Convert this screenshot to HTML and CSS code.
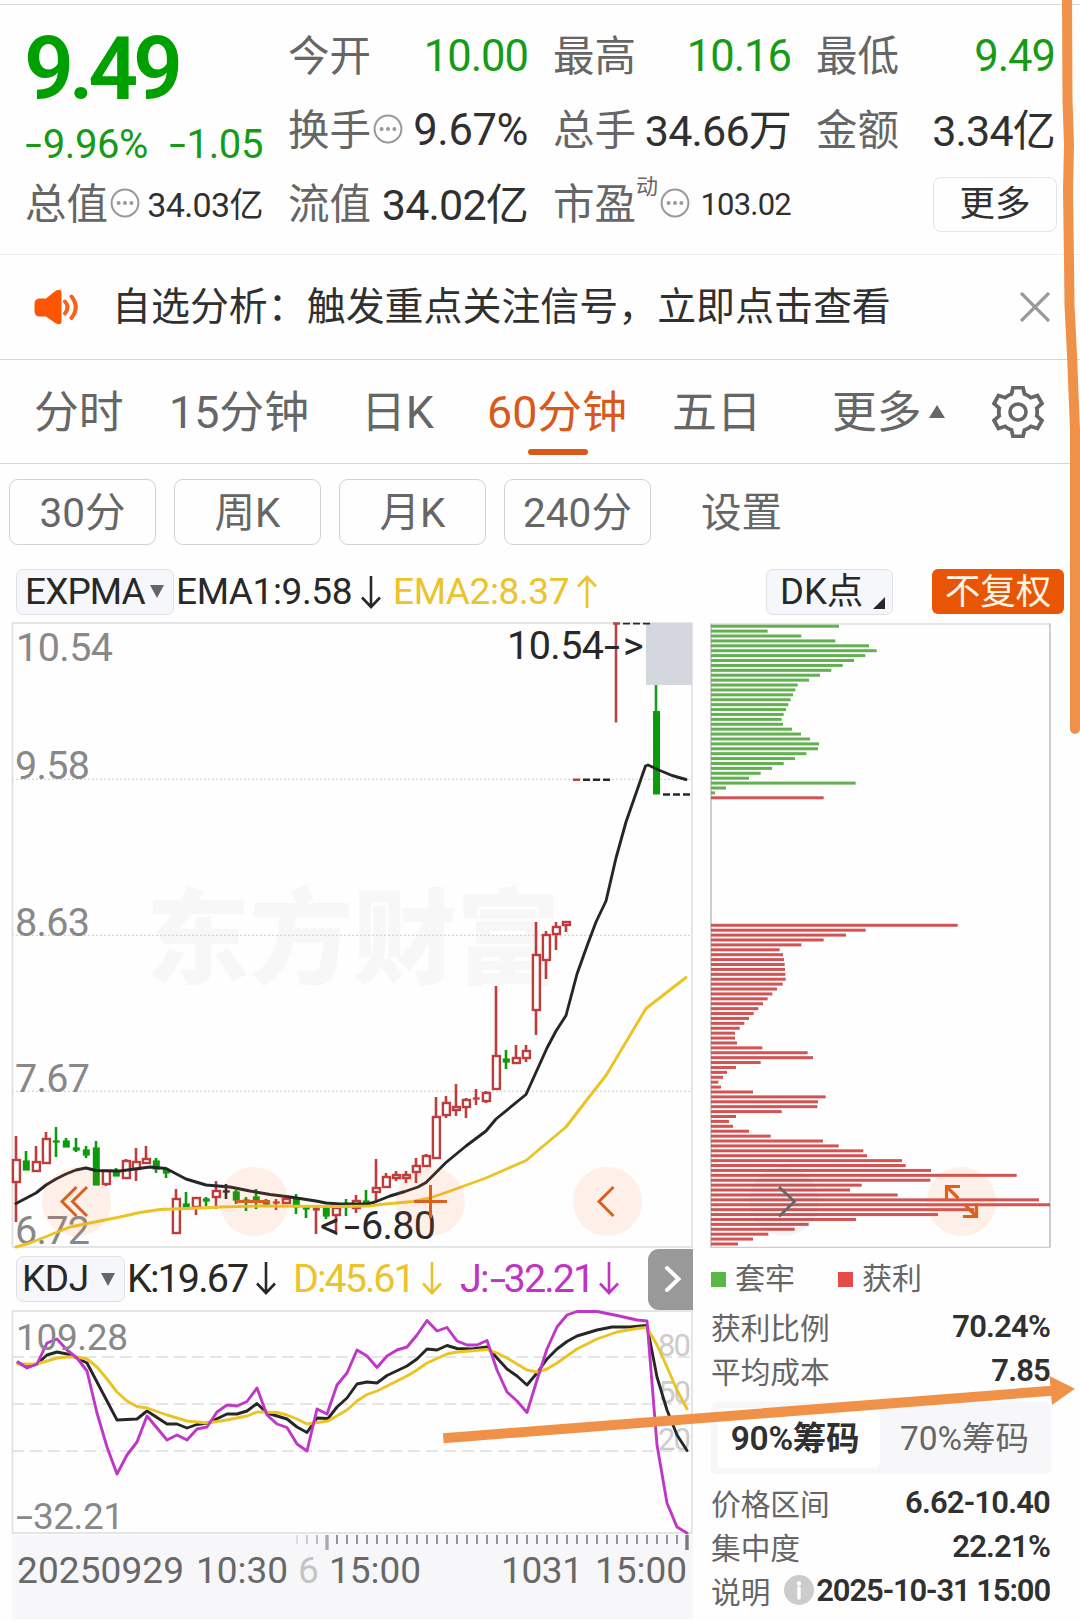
FILE: index.html
```html
<!DOCTYPE html>
<html lang="zh-CN">
<head>
<meta charset="utf-8">
<title>60分钟K线</title>
<link rel="stylesheet" href="styles.css">
</head>
<body>
<svg class="defs" width="0" height="0">
  <symbol id="dots" viewBox="0 0 30 30"><circle cx="15" cy="15" r="13.4" fill="none" stroke="#999" stroke-width="2"/><circle cx="8.6" cy="15" r="2" fill="#999"/><circle cx="15" cy="15" r="2" fill="#999"/><circle cx="21.4" cy="15" r="2" fill="#999"/></symbol>
  <symbol id="down" viewBox="0 0 20 34"><path d="M10 1V32M1 22.5L10 32L19 22.5" fill="none" stroke="currentColor" stroke-width="2.6"/></symbol>
  <symbol id="up" viewBox="0 0 20 34"><path d="M10 33V2M1 11.500L10 2L19 11.500" fill="none" stroke="currentColor" stroke-width="2.6"/></symbol>
</svg>
<main class="page">
  <header class="quote">
    <div class="price">
      <strong>9.49</strong>
      <div class="change"><span><i class="minus">-</i>9.96%</span><span><i class="minus">-</i>1.05</span></div>
    </div>
    <div class="cell"><span class="label">今开</span><span class="val green">10.00</span></div>
    <div class="cell"><span class="label">最高</span><span class="val green">10.16</span></div>
    <div class="cell"><span class="label">最低</span><span class="val green">9.49</span></div>
    <div class="cell"><span class="label">换手<svg class="dots"><use href="#dots"/></svg></span><span class="val pct">9.67%</span></div>
    <div class="cell"><span class="label">总手</span><span class="val cjk">34.66万</span></div>
    <div class="cell"><span class="label">金额</span><span class="val cjk">3.34亿</span></div>
    <div class="cell"><span class="label">总值<svg class="dots"><use href="#dots"/></svg></span><span class="val mid">34.03亿</span></div>
    <div class="cell"><span class="label">流值</span><span class="val cjk">34.02亿</span></div>
    <div class="cell"><span class="label">市盈<sup>动</sup><svg class="dots"><use href="#dots"/></svg></span><span class="val small">103.02</span></div>
    <div class="cell end"><button class="more">更多</button></div>
  </header>

  <section class="notice">
    <svg class="speaker" viewBox="0 0 46 36"><path d="M6 9.500H12L22 1.500Q27.500 -1 27.500 4V32Q27.500 37 22 34.500L12 27.500H6Q0.500 27.500 .5 22V15Q.5 9.500 6 9.500Z" fill="#ff5500"/><path d="M31 12.500Q36 18 31 24.500M37.500 7.500Q46 18 37.500 29" fill="none" stroke="#f96319" stroke-width="4" stroke-linecap="round"/></svg>
    <p>自选分析：触发重点关注信号，立即点击查看</p>
    <svg class="close" viewBox="0 0 30 30"><path d="M1 1L29 29M29 1L1 29" stroke="#999" stroke-width="3.300"/></svg>
  </section>

  <nav class="tabs">
    <span>分时</span><span>15分钟</span><span>日K</span><span class="on">60分钟</span><span>五日</span>
    <span>更多<i class="tri-up"></i></span>
    <svg class="gear" viewBox="-26 -26 52 52"><path d="M-5 -24.500H5L6.500 -18Q10 -16.800 12.800 -14.300L19.500 -16.500L24 -8.500L18.800 -3.800Q19.600 0 18.800 3.800L24 8.500L19.500 16.500L12.800 14.300Q10 16.800 6.500 18L5 24.500H-5L-6.500 18Q-10 16.800 -12.800 14.300L-19.500 16.500L-24 8.500L-18.800 3.800Q-19.600 0 -18.800 -3.800L-24 -8.500L-19.500 -16.500L-12.800 -14.300Q-10 -16.800 -6.500 -18Z" fill="none" stroke="#666" stroke-width="3.800"/><circle r="8" fill="none" stroke="#666" stroke-width="3.600"/></svg>
  </nav>

  <div class="periods">
    <button>30分</button><button>周K</button><button>月K</button><button>240分</button><span>设置</span>
  </div>

  <div class="indicator">
    <span class="pill expma">EXPMA<i class="tri-down"></i></span>
    <span class="ema">EMA1:9.58</span><svg class="arrow"><use href="#down"/></svg>
    <span class="ema yellow second">EMA2:8.37</span><svg class="arrow yellow"><use href="#up"/></svg>
    <span class="pill dk">DK点<i class="corner"></i></span>
    <span class="adjust">不复权</span>
  </div>

  <div class="body">
    <div class="left">
      <svg class="kline" viewBox="12 622 682 626">
        <text class="watermark" x="146" y="976" textLength="414" lengthAdjust="spacingAndGlyphs">东方财富</text>
        <path d="M12 779.300H692M12 935.300H692M12 1091.300H692" stroke="#ccc" stroke-dasharray="2 2"/>
        <rect x="12.500" y="623" width="679.500" height="624" fill="none" stroke="#dfdfdf" stroke-width="1.600"/>
        <g id="candles"></g>
        <rect x="646" y="623" width="46" height="62" fill="#d4d7dd"/>
        <path d="M656 685V712" stroke="#1c9a1c" stroke-width="2.600"/><path d="M656.500 711V794.500" stroke="#0a9c0a" stroke-width="7"/>
        <path d="M616 623V722.500" stroke="#b8433f" stroke-width="2.600"/>
        <path d="M573 779.800H580M613 623.500H620" stroke="#b8433f" stroke-width="2.400"/>
        <path d="M583 779.800H610M663 794.500H690" stroke="#282828" stroke-width="2.400" stroke-dasharray="7 3"/>
        <path d="M623 623.600H650" stroke="#282828" stroke-width="1.600" stroke-dasharray="7 3"/>
        <g class="axis-text">
          <text x="16" y="661" textLength="97">10.54</text><text x="15" y="779" textLength="75">9.58</text><text x="15" y="936" textLength="75">8.63</text><text x="15" y="1092" textLength="75">7.67</text><text x="15" y="1244" textLength="75">6.72</text>
        </g>
        <polyline class="line dark" points="16,1203.500 36,1193 46,1185 56,1179 66,1174 76,1170 86,1168 96,1170.500 120,1171 150,1167 166,1168.500 186,1179 206,1185 230,1187 250,1191 270,1194.500 290,1197 316,1201 326,1203 340,1204 368,1204 375,1202 390,1196 405,1191.500 418,1187 426,1182.500 446,1162.500 466,1146 486,1131 496,1119 526,1094.500 547,1048 556,1031 566,1015.500 577,974 587,946 596,922 606,901 616,858 626,822 645.500,766 648,765 660,770.500 672,775.500 686,779.500"/>
        <polyline class="line gold" points="16,1247 30,1243 50,1235 70,1227 90,1223 120,1217 140,1212.500 160,1209.500 200,1208 220,1207 260,1206 340,1206.500 370,1206 380,1204.500 413,1201.500 430,1198 446,1192.500 486,1178 526,1160.500 566,1127 586,1101 606,1075.500 646,1008.500 686,977.500"/>
        <g class="mark">
          <text x="507" y="659" textLength="97">10.54</text><text x="604" y="659" textLength="16" lengthAdjust="spacingAndGlyphs">-</text><text x="623" y="659">&gt;</text>
          <text x="320" y="1239">&lt;</text><text x="344" y="1239" textLength="16" lengthAdjust="spacingAndGlyphs">-</text><text x="361" y="1239" textLength="75">6.80</text>
        </g>
        <g fill="#ff6a28" fill-opacity=".1"><circle cx="76.500" cy="1202" r="34.500"/><circle cx="254" cy="1201.500" r="34.500"/><circle cx="430.500" cy="1201.500" r="34.500"/><circle cx="607.500" cy="1201.500" r="34.500"/></g>
        <path d="M76.500 1187L62 1201.500L76.500 1216M87 1187L72.500 1201.500L87 1216M236 1201.500H270M414 1201.500H447M430.500 1185V1218M613.500 1187L599 1201.500L613.500 1216" fill="none" stroke="#d8611f" stroke-width="3"/>
      </svg>
      <div class="kdj-bar">
        <span class="pill kdj">KDJ<i class="tri-down"></i></span>
        <span class="k">K:19.67</span><svg class="arrow"><use href="#down"/></svg>
        <span class="k yellow d">D:45.61</span><svg class="arrow yellow"><use href="#down"/></svg>
        <span class="k purple j">J:<i class="minus">-</i>32.21</span><svg class="arrow purple"><use href="#down"/></svg>
        <span class="next"><svg viewBox="0 0 18 28"><path d="M3 3L14.500 14L3 25" fill="none" stroke="#fff" stroke-width="4" stroke-linecap="round"/></svg></span>
      </div>
      <svg class="kdj-chart" viewBox="12 1310 682 225">
        <path d="M12 1357H692M12 1404H692M12 1451H692" stroke="#ddd" stroke-width="1.600" stroke-dasharray="12 6"/>
        <rect x="12.500" y="1311" width="679.500" height="222" fill="none" stroke="#dfdfdf" stroke-width="1.600"/>
        <g class="levels"><text x="658" y="1356" textLength="33">80</text><text x="658" y="1403" textLength="33">50</text><text x="658" y="1450" textLength="33">20</text></g>
        <polyline class="line dark" points="18,1363 27,1367 37,1364 47,1355 57,1352 67,1354 77,1358 87,1363 117,1420 137,1419 147,1411 167,1424 177,1424 187,1428 197,1424.500 208,1423 227,1414 237,1414 247,1411 257,1403.500 267,1413 287,1419 297,1427 307,1432.500 317,1418 328,1418.500 337,1407 347,1398 357,1384 367,1382 377,1383 387,1375.500 407,1366 417,1359 427,1349 437,1350 447,1345.500 457,1348.500 472,1349 487,1347 497,1358 507,1369 517,1376 527,1385 537,1373 547,1359 557,1349 567,1341.500 577,1336 597,1330 612,1327 630,1327 647,1325.500 657,1377 667,1410 677,1435 687,1450.500"/>
        <polyline class="line gold" points="18,1364 37,1364 57,1358 67,1357 77,1357 87,1359 97,1367 107,1379 117,1392 127,1401 137,1406.500 147,1408 167,1415 187,1421 207,1423 227,1420 247,1416 257,1412 277,1412.500 287,1415 297,1419 307,1424 328,1421 347,1410 357,1401 367,1394.500 377,1391 407,1376 417,1370 427,1363 447,1354 457,1352 487,1349.500 497,1353 507,1358 527,1370 537,1372 547,1369 557,1363 577,1349 597,1339 617,1332 637,1328.500 647,1327.500 657,1345 667,1367 677,1390 687,1409"/>
        <polyline class="line violet" points="18,1362 27,1368 37,1364 47,1343 57,1339 67,1350 77,1358 87,1371 97,1413 107,1447 117,1474 127,1455 137,1442 147,1416 157,1428 167,1440 177,1435 187,1440 197,1429 207,1427 217,1412 227,1405 237,1406 247,1401.500 257,1388 267,1415 277,1424 287,1427.500 297,1444 307,1451 317,1409 327,1414 337,1385 347,1373 357,1350 367,1356 377,1367.500 387,1356 397,1350 407,1347 417,1335 427,1320.500 437,1331 447,1327.500 457,1341 467,1345 477,1345 487,1340.500 497,1370 507,1392 517,1401 527,1412.500 537,1380 547,1349 557,1327 567,1315 577,1311.500 597,1311.500 617,1315.500 637,1320 647,1321 657,1445 667,1503 677,1527 687,1533"/>
        <g class="axis-text range"><text x="16" y="1350" textLength="112">109.28</text><text x="16" y="1529" textLength="17" lengthAdjust="spacingAndGlyphs">-</text><text x="33" y="1529" textLength="91">32.21</text></g>
      </svg>
      <svg class="dates" viewBox="12 1535 682 84">
        <rect x="12" y="1535" width="681" height="84" fill="#f7f7fa"/>
        <g id="ticks"></g>
        <text x="17" y="1583" textLength="167">20250929</text><text x="196" y="1583" textLength="92">10:30</text><text x="298" y="1583" class="faded">6</text><text x="329" y="1583" textLength="92">15:00</text><text x="501" y="1583" textLength="82">1031</text><text x="595" y="1583" textLength="92">15:00</text>
      </svg>
    </div>

    <aside class="chips">
      <svg class="chip-chart" viewBox="710 622 342 627">
        <path d="M711 624H1050M711 1247.300H1050" stroke="#ccc" stroke-width="1.200"/><path d="M711 623.500V1247.500M1050 623.500V1247.500" stroke="#c9c9c9" stroke-width="1.800"/>
        <g id="bars"></g>
        <circle cx="784" cy="1201.500" r="34.500" fill="#667" fill-opacity=".07"/><path d="M779 1187L794.500 1201.500L779 1216.500" fill="none" stroke="#666" stroke-width="2.800"/>
        <circle cx="961.500" cy="1201.500" r="34.500" fill="#ff6a28" fill-opacity=".1"/>
        <path d="M960 1186.500H946.500V1199.500M947 1187L958.500 1198.500M963 1216.500H976.500V1203.500M976 1216L964.500 1204.500" fill="none" stroke="#dc611e" stroke-width="3.200"/>
      </svg>
      <div class="legend"><i class="sq g"></i><span>套牢</span><i class="sq r"></i><span>获利</span></div>
      <div class="stat"><span>获利比例</span><b>70.24%</b></div>
      <div class="stat"><span>平均成本</span><b>7.85</b></div>
      <div class="switch"><span class="active">90%筹码</span><span>70%筹码</span></div>
      <div class="stat"><span>价格区间</span><b>6.62-10.40</b></div>
      <div class="stat"><span>集中度</span><b>22.21%</b></div>
      <div class="stat"><span>说明</span><svg class="info" viewBox="0 0 30 30"><circle cx="15" cy="15" r="15" fill="#ccc"/><circle cx="15" cy="8.500" r="2.200" fill="#fff"/><path d="M15 13V23" stroke="#fff" stroke-width="3.400" stroke-linecap="round"/></svg><b class="date">2025-10-31 15:00</b></div>
    </aside>
  </div>

  <svg class="marker" viewBox="0 0 1080 1621">
    <path d="M1067 -5L1067.500 100L1069 145L1068 190L1069 260L1069.500 305L1072 355L1075 430V729" fill="none" stroke="#f0914a" stroke-width="10" stroke-linecap="round" stroke-linejoin="round"/>
    <path d="M443.300 1438.200L1052 1390.800" stroke="#f0914a" stroke-width="10"/><path d="M1049.500 1376L1075 1388.800L1052 1405Z" fill="#f0914a"/>
  </svg>
</main>
<script src="charts.js"></script>
</body>
</html>
```
FILE: styles.css
```css
* { box-sizing: border-box; }
body { margin: 0; background: #fefefe; color: #303030; font-family: Roboto, "Noto Sans CJK SC", sans-serif; }
button { font: inherit; color: inherit; background: #fefefe; padding: 0; margin: 0; }
svg { display: block; flex: none; }
.defs { position: absolute; }
.page { position: relative; width: 1080px; height: 1621px; overflow: hidden; padding-top: 4px; }
.green { color: #159b15 !important; }
.yellow { color: #ebc32c !important; }
.purple { color: #be35c4 !important; }
.minus { display: inline-block; font-style: normal; transform: scaleX(1.5); margin: 0 4px 0 3px; }

.quote { height: 251px; border-top: 1px solid #d8d8d8; border-bottom: 1px solid #ececec; padding: 14px 24px 0 25px; display: grid; grid-template-columns: 238px 240px 238px 239px; column-gap: 25px; grid-template-rows: 74px 74px 74px; }
.price { grid-row: span 2; color: #00a000; }
.price strong { display: block; font-weight: 600; font-size: 87.500px; line-height: 101px; letter-spacing: -5.300px; margin-left: -1px; }
.change { display: flex; justify-content: space-between; font-size: 40px; line-height: 50px; color: #159b15; letter-spacing: -.4px; }
.cell { display: flex; justify-content: space-between; align-items: center; white-space: nowrap; line-height: 60px; }
.cell.end { justify-content: flex-end; }
.label { display: flex; align-items: center; font-size: 41.500px; color: #666; padding-top: 2px; }
.label .dots { width: 30px; height: 30px; margin-left: 2px; margin-top: -4px; }
.label sup { font-size: 22px; line-height: 30px; align-self: flex-start; margin: -3px 0 0 0; }
.val { font-size: 43.500px; letter-spacing: -1px; padding-top: 2px; }
.val.pct { letter-spacing: -.4px; }
.val.cjk { font-size: 43px; letter-spacing: -.8px; }
.val.mid { font-size: 34px; letter-spacing: -.6px; }
.val.small { font-size: 31px; letter-spacing: -.8px; }
.more { width: 124px; height: 55px; border: 1.500px solid #e2e5e8; border-radius: 8px; font-size: 35.500px; line-height: 52px; margin-right: -2px; }

.notice { height: 105px; border-bottom: 1px solid #d6d6d6; display: flex; align-items: center; padding: 0 30px 1px 34px; }
.speaker { width: 46px; height: 36px; }
.notice p { margin: 0 auto 0 32px; font-size: 38.950px; line-height: 50px; }
.close { width: 30px; height: 30px; }

.tabs { height: 104px; border-bottom: 1px solid #d6d6d6; padding: 3px 0 0 34px; display: grid; grid-template-columns: 135px 192px 126px 185px 160px 159px 60px; align-items: center; font-size: 44.800px; line-height: 60px; color: #666; white-space: nowrap; }
.tabs .on { color: #d9591a; justify-self: start; position: relative; }
.tabs .on::after { content: ""; position: absolute; left: 41px; bottom: -12px; width: 60px; height: 6px; border-radius: 3px; background: #d9591a; }
.tri-up { display: inline-block; border: 8px solid transparent; border-top: 0; border-bottom: 13px solid #666; margin: 0 0 10px 7px; vertical-align: baseline; }
.gear { width: 52px; height: 52px; margin: -3px 0 0 1px; }

.periods { display: flex; padding: 15px 0 0 9px; gap: 18px; color: #666; font-size: 40.500px; line-height: 64px; }
.periods button { width: 147px; height: 66px; border: 1.500px solid #d2d2d2; border-radius: 9px; padding-top: 2px; line-height: 62px; }
.periods span { margin-left: 32px; line-height: 69px; height: 66px; }

.indicator { display: flex; align-items: center; height: 77px; padding: 16px 11px 0 16px; color: #282828; font-size: 37px; line-height: 46px; white-space: nowrap; }
.pill { display: flex; align-items: center; height: 46px; background: #f6f7fa; border: 1.500px solid #dfe1e6; border-radius: 7px; }
.expma { width: 158px; padding-left: 8px; letter-spacing: -.9px; }
.expma .tri-down { margin-left: 5px; }
.tri-down { border: 7.500px solid transparent; border-bottom: 0; border-top: 13px solid #666; }
.ema { margin-left: 2px; width: 180px; letter-spacing: -.4px; }
.ema.second { margin-left: 12px; width: 179px; }
.arrow { width: 20px; height: 34px; color: #282828; margin-left: 5px; }
.dk { width: 127px; margin-left: 169px; padding-left: 13px; font-size: 36.500px; }
.corner { border-left: 12px solid transparent; border-bottom: 12px solid #282828; margin: 22px 0 0 10px; }
.adjust { margin-left: 39px; width: 132px; height: 45px; border-radius: 6px; background: #e85504; color: #fff4e8; text-align: center; font-size: 35.500px; }

.body { display: flex; padding-left: 12px; }
.left { width: 682px; }
.kline { width: 682px; height: 626px; overflow: visible; }
.kline text, .kdj-chart text, .dates text { font-family: Roboto, sans-serif; font-size: 39.500px; }
.kline .watermark { font-family: "Noto Sans CJK SC", sans-serif; font-weight: 900; font-size: 103px; fill: #f7f7f7; }
.axis-text { fill: #888; }
.mark { fill: #282828; }
.line { fill: none; stroke-width: 2.900; stroke-linejoin: round; stroke-linecap: round; }
.dark { stroke: #262626; }
.gold { stroke: #ebc322; }
.violet { stroke: #bf37c6; }
.kdj-bar { display: flex; align-items: center; height: 62px; padding-left: 4px; font-size: 39.500px; line-height: 46px; color: #282828; white-space: nowrap; }
.kdj { width: 109px; font-size: 37px; padding-left: 5px; letter-spacing: -.4px; }
.kdj .tri-down { margin-left: auto; margin-right: 9px; }
.k { margin-left: 2px; width: 124px; letter-spacing: -1.900px; }
.kdj-bar .arrow { margin-left: 5px; margin-top: -3px; }
.k.d { margin-left: 17px; width: 124px; letter-spacing: -2px; }
.k.j { margin-left: 18px; width: 134px; letter-spacing: -1.900px; }
.j .minus { margin: 0 3px 0 4px; }
.next { margin-left: auto; margin-right: 1px; width: 45px; height: 61px; border-radius: 11px 0 0 11px; background: #999; display: flex; align-items: center; padding-left: 16px; }
.next svg { width: 18px; height: 28px; }
.kdj-chart { width: 682px; height: 225px; overflow: visible; }
.kdj-chart .levels text { font-size: 31px; fill: #ccc; }
.kdj-chart .range text, .dates text { font-size: 37px; }
.dates { width: 682px; height: 84px; }
.dates text { fill: #686868; }
.dates .faded { fill: #c4c4c6; }

.chips { width: 342px; margin-left: 16px; }
.chip-chart { width: 342px; height: 627px; }
.legend { display: flex; align-items: center; height: 60px; margin-left: 1px; font-size: 30px; line-height: 40px; color: #666; }
.sq { width: 15px; height: 15px; margin-right: 9px; }
.sq.g { background: #5ab946; }
.sq.r { background: #e84a4a; margin-left: 43px; }
.stat { display: flex; align-items: center; justify-content: space-between; height: 44px; padding: 0 2px 0 1px; font-size: 29.700px; color: #666; white-space: nowrap; }
.legend + .stat { margin-top: -5px; }
.stat b { font-weight: 600; font-size: 31px; color: #303030; letter-spacing: -.8px; padding-top: 1px; }
.switch { margin: 10px 1px 6px 1px; height: 72px; background: #f7f7fa; border-radius: 6px; padding: 6px; display: flex; font-size: 33.500px; line-height: 62px; color: #666; }
.switch span { width: 163px; height: 60px; text-align: center; border-radius: 6px; padding-left: 6px; }
.switch .active { background: #fff; color: #303030; font-weight: 600; letter-spacing: -.3px; padding: 0 7px 0 0; }
.info { width: 30px; height: 30px; margin-left: 13px; }
.stat b.date { margin: 0 0 0 2px; letter-spacing: -1.100px; }

.marker { position: absolute; left: 0; top: 0; width: 1080px; height: 1621px; pointer-events: none; }
```
FILE: charts.js
```js
const NS = "http://www.w3.org/2000/svg";
function add(parent, tag, attrs) {
  const el = document.createElementNS(NS, tag);
  for (const k in attrs) el.setAttribute(k, attrs[k]);
  parent.appendChild(el);
}

// Each candle: high, body top, body bottom, low, colour; one every 10 units.
const candles = [
  [1136,1160,1182,1222,"r"],[1151,1161,1170,1170,"g"],[1146,1162,1171,1171,"r"],[1132,1139,1163,1164,"r"],
  [1127,1141,1142,1157,"g"],[1138,1141,1147,1147,"g"],[1138,1148,1150,1152,"g"],[1146,1150,1155,1158,"g"],
  [1141,1148,1185,1185,"g"],[1171,1171,1184,1186,"r"],[1168,1172,1176,1176,"g"],[1159,1161,1178,1178,"r"],
  [1148,1162,1169,1181,"r"],[1146,1159,1163,1163,"r"],[1158,1161,1169,1173,"g"],[1168,1170,1173,1178,"g"],
  [1189,1199,1233,1233,"r"],[1192,1204,1208,1208,"g"],[1198,1198,1207,1215,"r"],[1197,1199,1201,1206,"g"],
  [1181,1191,1197,1209,"r"],[1184,1191,1192,1199,"k"],[1190,1192,1200,1204,"g"],[1197,1200,1202,1211,"g"],
  [1189,1197,1201,1209,"g"],[1199,1202,1204,1207,"g"],[1199,1202,1203,1210,"r"],[1197,1199,1203,1203,"r"],
  [1194,1198,1207,1214,"g"],[1207,1207,1209,1218,"g"],[1207,1208,1210,1234,"r"],[1207,1208,1216,1219,"g"],
  [1207,1208,1215,1231,"r"],[1199,1206,1207,1216,"g"],[1195,1201,1208,1213,"r"],[1190,1201,1203,1204,"g"],
  [1159,1188,1192,1201,"r"],[1173,1177,1187,1188,"r"],[1171,1175,1178,1181,"r"],[1171,1175,1178,1183,"r"],
  [1158,1166,1172,1183,"r"],[1154,1156,1166,1166,"r"],[1097,1117,1158,1158,"r"],[1096,1103,1115,1118,"r"],
  [1084,1107,1110,1116,"r"],[1098,1100,1107,1118,"r"],[1089,1098,1099,1105,"r"],[1091,1093,1101,1103,"r"],
  [986,1056,1089,1090,"r"],[1050,1059,1062,1069,"g"],[1045,1058,1063,1064,"r"],[1045,1051,1058,1062,"r"],
  [922,955,1010,1035,"r"],[931,935,960,979,"r"],[922,927,934,950,"r"],[921,922,925,932,"r"]
];
const ink = { r: "#c03c3a", g: "#0a9c0a", k: "#282828" };
const candleLayer = document.getElementById("candles");
candles.forEach(([hi, top, bot, lo, c], i) => {
  const x = 16 + i * 10;
  const hollow = c === "r" && bot - top > 2;
  add(candleLayer, "path", { d: `M${x} ${hi}V${top}M${x} ${bot}V${lo}`, stroke: ink[c], "stroke-width": 2.6 });
  add(candleLayer, "rect", hollow
    ? { x: x - 3.1, y: top, width: 7, height: bot - top, fill: "#fefefe", stroke: ink[c], "stroke-width": 2.4 }
    : { x: x - 3.2, y: top - 0.6, width: 7, height: bot - top + 1.2, fill: ink[c] });
});

// Chip distribution widths by price level, in thirds of a unit.
const trapped = [384,170,271,373,474,497,463,429,395,361,327,294,260,253,246,239,232,225,218,212,216,243,270,297,324,321,286,252,218,183,149,114,434,45,12];
const profit = [740,464,405,338,271,206,216,219,221,222,223,224,215,198,184,170,156,142,128,114,100,86,72,72,78,154,290,306,149,75,48,36,22,30,126,344,321,319,212,75,54,66,114,179,336,383,457,468,573,584,660,917,658,452,417,560,984,1017,790,681,435,293,251,172,126,81];
const barLayer = document.getElementById("bars");
function bar(i, w, fill) {
  add(barLayer, "rect", { x: 711, y: 626.2 + i * 4.903 - 1.5, width: w / 3, height: 3, fill });
}
trapped.forEach((w, i) => bar(i, w, "#62b050"));
bar(35, 338, "#d25353");
profit.forEach((w, i) => bar(61 + i, w, "#d25353"));

const tickLayer = document.getElementById("ticks");
for (let x = 297; x <= 687; x += 10) {
  const major = x === 327 || x === 687;
  add(tickLayer, "path", {
    d: `M${x} 1535V${major ? 1550 : 1544}`, stroke: major ? (x === 327 ? "#aaa" : "#777") : "#888",
    "stroke-width": major ? 3.4 : 1.8, opacity: x < 327 ? 0.25 + (x - 297) / 60 : 1
  });
}
```
